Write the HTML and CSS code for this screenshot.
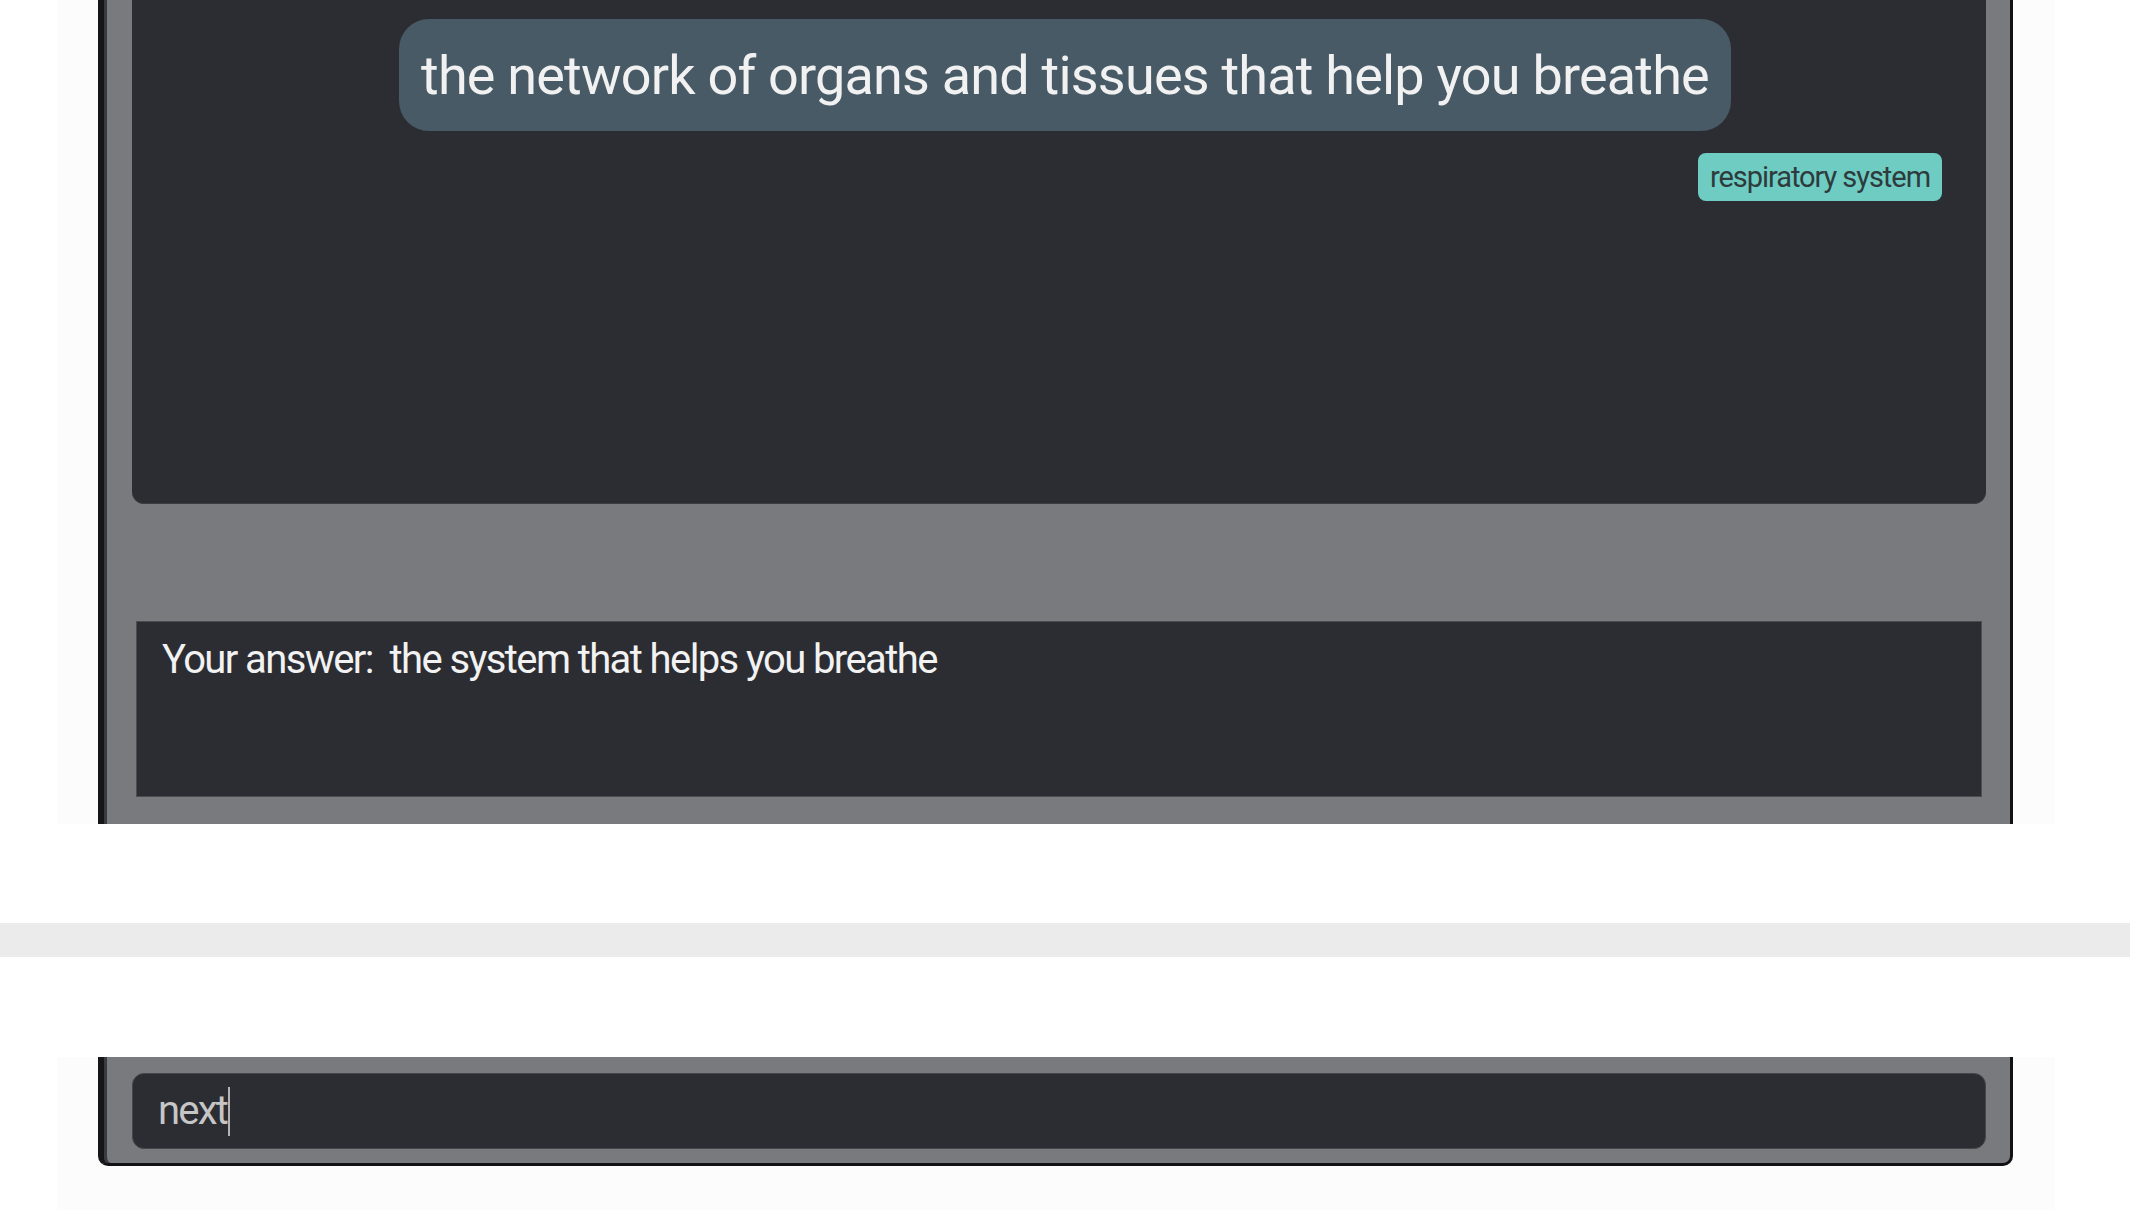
FILE: index.html
```html
<!DOCTYPE html>
<html lang="en">
<head>
<meta charset="utf-8">
<title>Flashcard</title>
<link rel="stylesheet" href="styles.css">
</head>
<body>
  <section class="shell shell-top">
    <div class="frame frame-top">
      <div class="chat">
        <div class="bubble">the network of organs and tissues that help you breathe</div>
        <div class="tag">respiratory system</div>
      </div>
      <div class="gap"></div>
      <div class="answer"><span class="answer-text">Your answer:&nbsp; the system that helps you breathe</span></div>
    </div>
  </section>
  <div class="spacer"></div>
  <div class="band"></div>
  <div class="spacer"></div>
  <section class="shell shell-bottom">
    <div class="frame frame-bottom">
      <div class="input"><span class="input-text">next</span><span class="caret"></span></div>
    </div>
  </section>
</body>
</html>
```
FILE: styles.css
```css
* { box-sizing: border-box; }
html, body { margin: 0; padding: 0; background: #ffffff; }
body {
  width: 2130px;
  height: 1210px;
  overflow: hidden;
  font-family: Roboto, "Liberation Sans", sans-serif;
}

.shell {
  margin: 0 75px 0 57px;
  padding: 0 42px 0 41px;
  background: #fcfcfc;
}

.frame {
  background: #797a7e;
  border-left: 6px solid #161618;
  border-right: 3px solid #111113;
  box-shadow: inset 3px 0 0 #3a3b3f;
}

.frame-top {
  height: 824px;
  padding: 0 24px 27px 28px;
  display: flex;
  flex-direction: column;
}

.chat {
  height: 504px;
  background: #2c2d32;
  border-radius: 0 0 12px 12px;
  border-bottom: 1px solid #3b3c41;
  display: flex;
  flex-direction: column;
  align-items: flex-end;
}

.bubble {
  margin-top: 19px;
  margin-right: 255px;
  width: 1332px;
  height: 112px;
  padding: 27px 0 0;
  background: #475a66;
  border-radius: 30px;
  color: #f1f1f1;
  font-size: 54px;
  line-height: 60px;
  letter-spacing: -0.8px;
  text-align: center;
  white-space: nowrap;
}

.tag {
  margin-top: 22px;
  margin-right: 44px;
  width: 244px;
  height: 48px;
  background: #6fccc2;
  border-radius: 8px;
  color: #2e3b3d;
  font-size: 29px;
  line-height: 48px;
  letter-spacing: -1.05px;
  text-align: center;
  white-space: nowrap;
}

.gap { height: 117px; flex: none; }

.answer {
  margin: 0 4px;
  height: 176px;
  background: #2c2d32;
  border: 1px solid #4c4d52;
  padding: 14px 0 0 25px;
}

.answer-text {
  display: block;
  color: #f2f2f2;
  font-size: 40px;
  line-height: 48px;
  letter-spacing: -1.6px;
  white-space: nowrap;
}

.spacer { height: 99px; }
.band { height: 34px; background: #ebebeb; }
.spacer + .band + .spacer { height: 100px; }

.shell-bottom { height: 153px; }

.frame-bottom {
  height: 109px;
  padding: 16px 24px 0 28px;
  border-bottom: 3px solid #111113;
  border-radius: 0 0 10px 10px;
}

.input {
  height: 76px;
  background: #2c2d32;
  border: 1px solid #46474c;
  border-radius: 12px;
  padding-left: 25px;
  display: flex;
  align-items: center;
}

.input-text {
  color: #c6c6c6;
  font-size: 40px;
  line-height: 48px;
  letter-spacing: -1.8px;
}

.caret {
  display: inline-block;
  width: 2px;
  height: 49px;
  margin-left: 1px;
  background: #b4b4b4;
}
```
